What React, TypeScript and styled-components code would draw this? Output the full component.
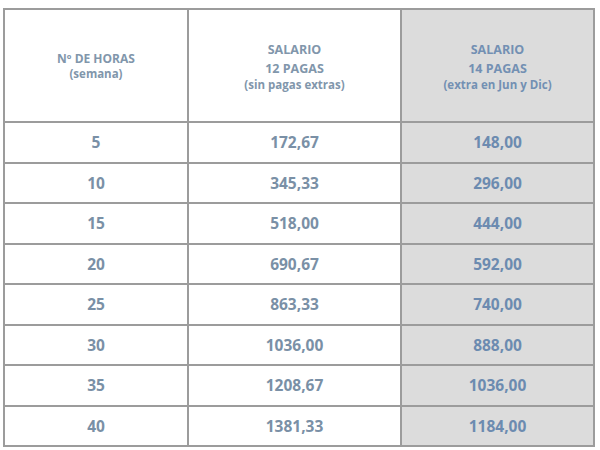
import React from 'react'
import styled, { createGlobalStyle } from 'styled-components'

const GlobalStyle = createGlobalStyle`
    body {
        margin: 0;
        background: #ffffff;
        font-family: "Open Sans", "Liberation Sans", sans-serif;
    }
`

interface IRow {
    hours: number
    twelve: string
    fourteen: string
}

const rows: IRow[] = [
    { hours: 5, twelve: '172,67', fourteen: '148,00' },
    { hours: 10, twelve: '345,33', fourteen: '296,00' },
    { hours: 15, twelve: '518,00', fourteen: '444,00' },
    { hours: 20, twelve: '690,67', fourteen: '592,00' },
    { hours: 25, twelve: '863,33', fourteen: '740,00' },
    { hours: 30, twelve: '1036,00', fourteen: '888,00' },
    { hours: 35, twelve: '1208,67', fourteen: '1036,00' },
    { hours: 40, twelve: '1381,33', fourteen: '1184,00' },
]

export default function App() {
    return (
        <Page>
            <GlobalStyle />
            <SalaryTable>
                <colgroup>
                    <col style={{ width: 184 }} />
                    <col style={{ width: 213 }} />
                    <col style={{ width: 193 }} />
                </colgroup>
                <thead>
                    <tr>
                        <HeadCell>
                            <Title $small>Nº DE HORAS</Title>
                            <Sub>(semana)</Sub>
                        </HeadCell>
                        <HeadCell>
                            <Title>SALARIO</Title>
                            <Title>12 PAGAS</Title>
                            <Sub>(sin pagas extras)</Sub>
                        </HeadCell>
                        <HeadCell $shaded>
                            <Title>SALARIO</Title>
                            <Title>14 PAGAS</Title>
                            <Sub>(extra en Jun y Dic)</Sub>
                        </HeadCell>
                    </tr>
                </thead>
                <tbody>
                    {rows.map((row) => (
                        <tr key={row.hours}>
                            <Cell>{row.hours}</Cell>
                            <Cell>{row.twelve}</Cell>
                            <Cell $shaded>{row.fourteen}</Cell>
                        </tr>
                    ))}
                </tbody>
            </SalaryTable>
        </Page>
    )
}

const Page = styled.div`
    padding: 8px 0 0 3px;
`

const SalaryTable = styled.table`
    width: 590px;
    border-collapse: collapse;
    table-layout: fixed;
    border: 2px solid #9c9c9c;
`

const HeadCell = styled.th<{ $shaded?: boolean }>`
    height: 111px;
    padding: 0;
    border: 2px solid #9c9c9c;
    background: ${(p) => (p.$shaded ? '#dcdcdc' : '#ffffff')};
    color: ${(p) => (p.$shaded ? '#7390b3' : '#8196ab')};
    text-align: center;
    vertical-align: middle;
    font-weight: 700;
`

const Title = styled.div<{ $small?: boolean }>`
    font-size: ${(p) => (p.$small ? '12px' : '12.5px')};
    line-height: ${(p) => (p.$small ? '16px' : '19px')};
`

const Sub = styled.div`
    font-size: 11.5px;
    line-height: 14px;
`

const Cell = styled.td<{ $shaded?: boolean }>`
    height: 38.5px;
    padding: 0;
    border: 2px solid #9c9c9c;
    background: ${(p) => (p.$shaded ? '#dcdcdc' : '#ffffff')};
    color: ${(p) => (p.$shaded ? '#6c8bb0' : '#7a90a6')};
    text-align: center;
    vertical-align: middle;
    font-size: 15.5px;
    font-weight: 700;
`
